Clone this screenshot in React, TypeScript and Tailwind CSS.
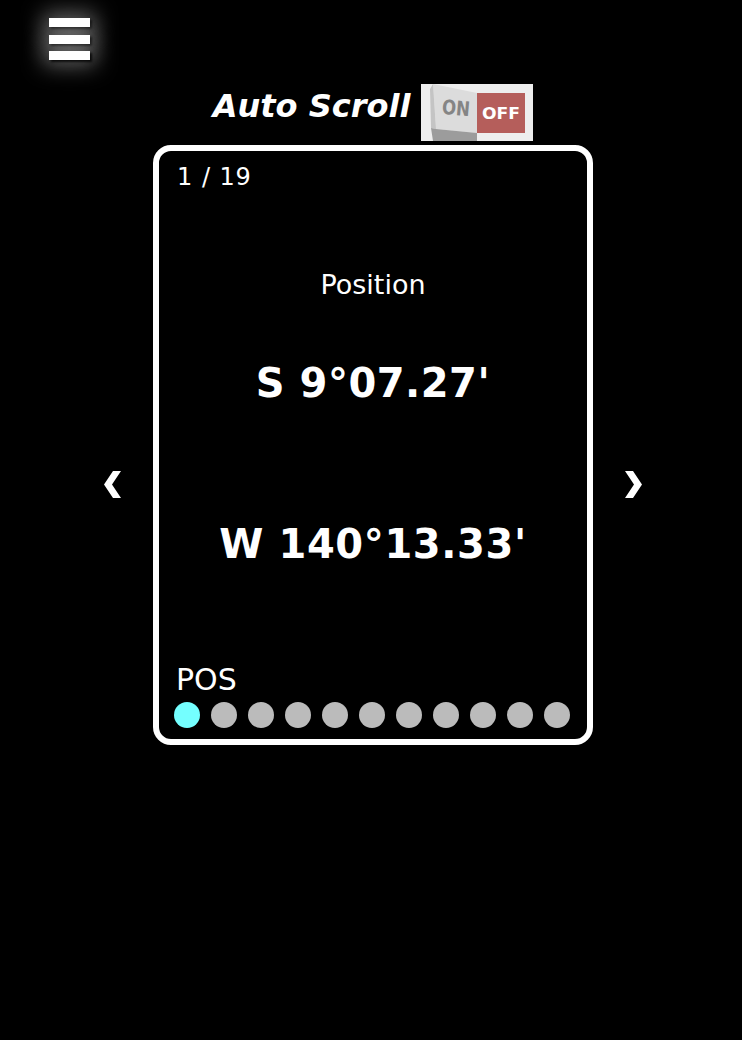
import React from "react"

const dots = Array.from({ length: 11 }, (_, i) => i)

function Toggle() {
  return (
    <svg width="112" height="57" viewBox="0 0 112 57">
      <rect x="0" y="0" width="112" height="57" fill="#eeeeee" />
      <rect x="56" y="9" width="48" height="40" fill="#b55e5b" />
      <polygon points="12,0 56,9 56,49 15,45" fill="#dcdcdc" />
      <polygon points="9,5 12,0 15,45 10,44" fill="#c4c4c4" />
      <polygon points="10,44 15,45 56,49 56,57 12,57" fill="#9c9c9c" />
      <text
        x="21"
        y="31"
        fontFamily="DejaVu Sans, sans-serif"
        fontWeight="bold"
        fontSize="20"
        fill="#858585"
        transform="rotate(5 35 25)"
        textLength="28"
        lengthAdjust="spacingAndGlyphs"
      >
        ON
      </text>
      <text
        x="61"
        y="35"
        fontFamily="DejaVu Sans, sans-serif"
        fontWeight="bold"
        fontSize="15"
        fill="#ffffff"
        textLength="38"
        lengthAdjust="spacingAndGlyphs"
      >
        OFF
      </text>
    </svg>
  )
}

function Chevron({ right }: { right?: boolean }) {
  return (
    <svg width="18" height="27" viewBox="0 0 18 27" className={right ? "-scale-x-100" : ""}>
      <polygon points="0,13.5 9,0 17,0 8,13.5 17,27 9,27" fill="#ffffff" />
    </svg>
  )
}

export default function App() {
  return (
    <div className="min-h-screen bg-black text-white font-['DejaVu_Sans',sans-serif]">
      <div className="pt-[18px] pl-[49px] flex flex-col gap-[7.5px]">
        <div className="w-[41px] h-[9px] bg-white shadow-[2px_2px_2px_rgba(0,0,0,0.8),0_0_22px_6px_rgba(255,255,255,0.35)]" />
        <div className="w-[41px] h-[9px] bg-white shadow-[2px_2px_2px_rgba(0,0,0,0.8),0_0_22px_6px_rgba(255,255,255,0.35)]" />
        <div className="w-[41px] h-[9px] bg-white shadow-[2px_2px_2px_rgba(0,0,0,0.8),0_0_22px_6px_rgba(255,255,255,0.35)]" />
      </div>

      <div className="pl-[4px] flex flex-col items-center">
        <div className="mt-[24px] flex items-start gap-[11px]">
          <div className="mt-[6px] text-[32px] leading-none font-bold italic">Auto Scroll</div>
          <Toggle />
        </div>

        <div className="mt-[4px] flex items-start gap-[31px]">
          <div className="mt-[326px]">
            <Chevron />
          </div>

          <div className="w-[440px] border-[6px] border-white rounded-[18px] flex flex-col pt-[14px] pb-[11px] px-[15px]">
            <div className="pl-[3px] text-[24px] leading-none tracking-[0.5px] [word-spacing:1px]">1 / 19</div>
            <div className="mt-[82px] text-center text-[27px] leading-none">Position</div>
            <div className="mt-[65px] text-center text-[40px] leading-none font-bold tracking-[0.5px]">S 9°07.27'</div>
            <div className="mt-[121px] text-center text-[40px] leading-none font-bold tracking-[0.6px]">W 140°13.33'</div>
            <div className="mt-[101px] pl-[2px] text-[30px] leading-none">POS</div>
            <div className="mt-[7px] flex gap-[11px]">
              {dots.map((i) => (
                <div
                  key={i}
                  className={i === 0 ? "w-[26px] h-[26px] rounded-full bg-[#74ffff]" : "w-[26px] h-[26px] rounded-full bg-[#bbbbbb]"}
                />
              ))}
            </div>
          </div>

          <div className="mt-[326px]">
            <Chevron right />
          </div>
        </div>
      </div>
    </div>
  )
}
